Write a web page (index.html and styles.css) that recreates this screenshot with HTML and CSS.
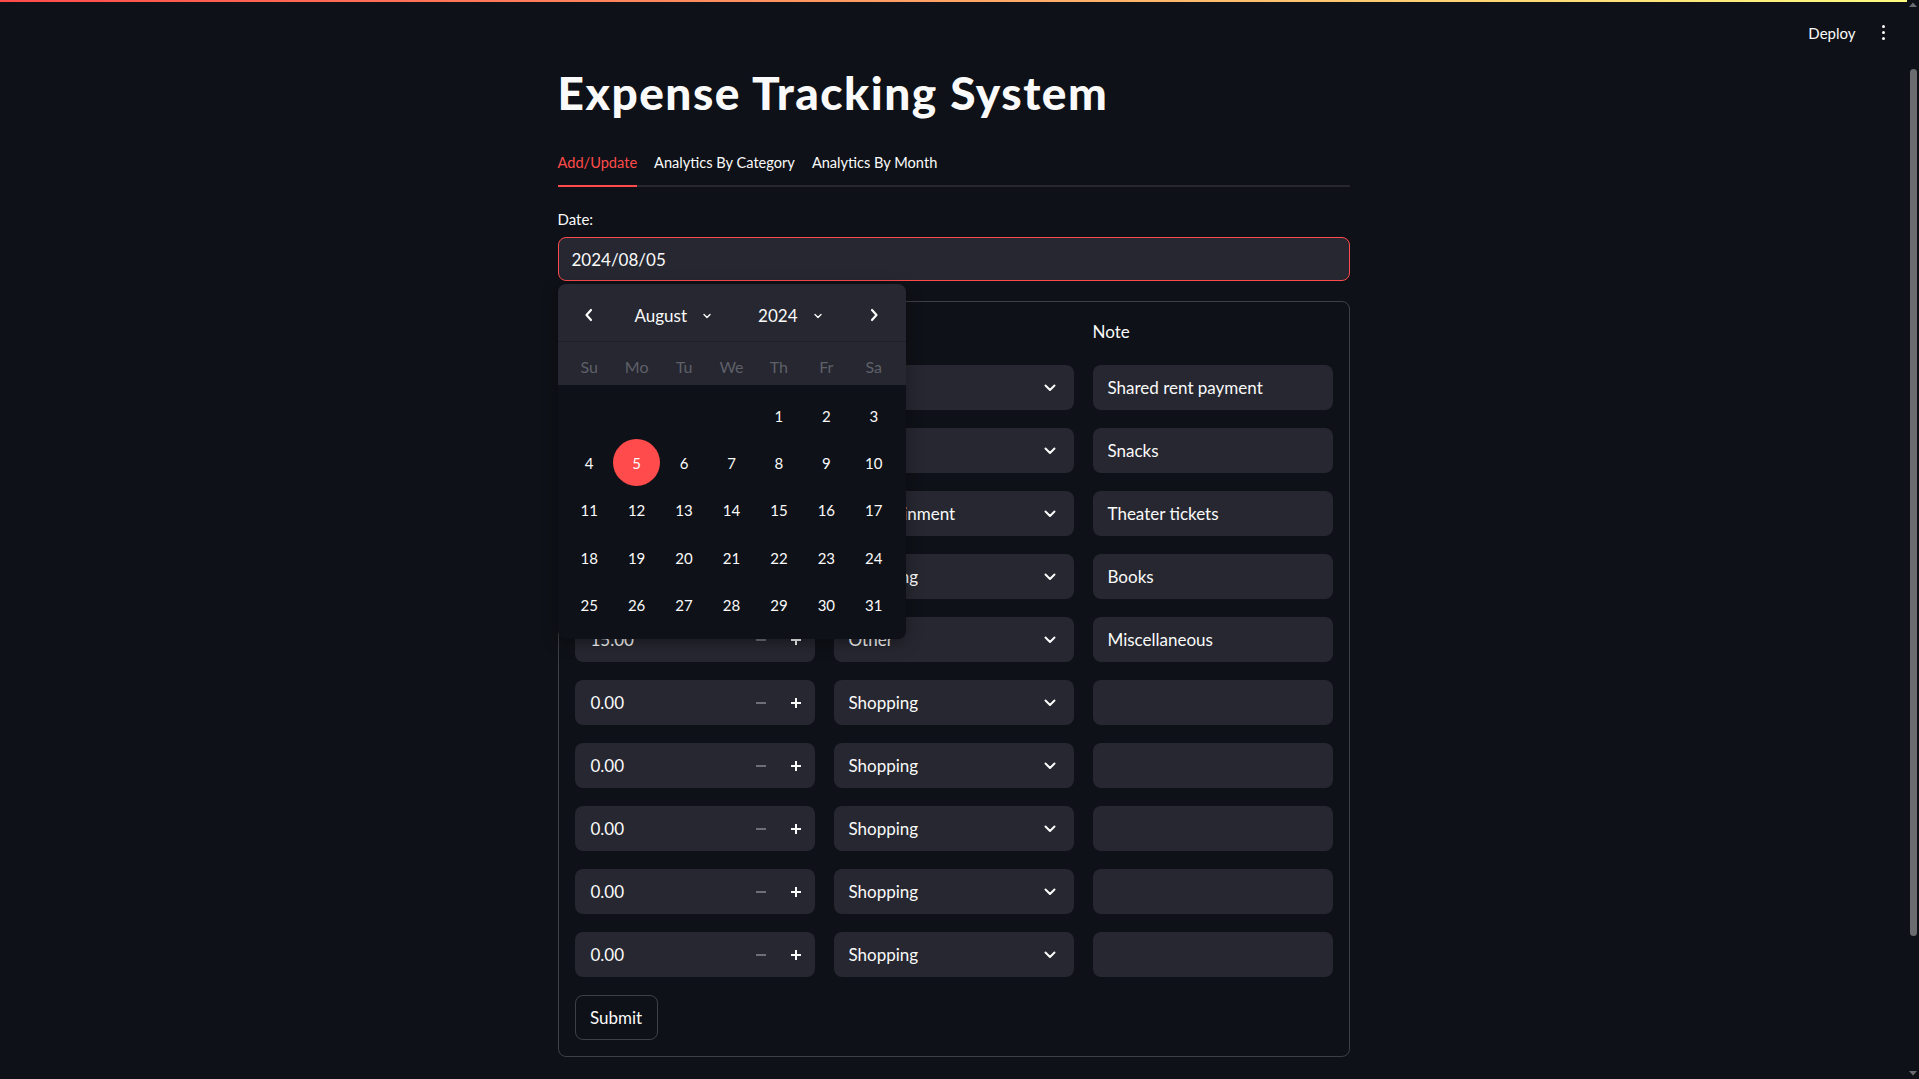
FILE: index.html
```html
<!DOCTYPE html>
<html lang="en">
<head>
<meta charset="utf-8">
<title>Expense Tracking System</title>
<link rel="stylesheet" href="styles.css">
</head>
<body>
<div class="app">
  <div class="decoration"></div>
  <header class="topbar">
    <span class="deploy">Deploy</span>
    <span class="menu"><i></i><i></i><i></i></span>
  </header>
  <main class="main">
    <h1 class="title">Expense Tracking System</h1>
    <nav class="tabs">
      <span class="tab active">Add/Update</span>
      <span class="tab">Analytics By Category</span>
      <span class="tab">Analytics By Month</span>
    </nav>
    <div class="field-label">Date:</div>
    <div class="date-field">
      <div class="date-input">2024/08/05</div>
      <div class="calendar">
        <div class="cal-head">
          <div class="cal-nav">
            <svg class="nav-arrow" width="10" height="14" viewBox="0 0 10 14"><path d="M7 2 L2.5 7 L7 12" fill="none" stroke="#fafafa" stroke-width="2.2" stroke-linecap="round" stroke-linejoin="round"/></svg>
            <span class="cal-select month">August<svg width="10" height="6" viewBox="0 0 10 6"><path d="M2 1.5 L5 4.5 L8 1.5" fill="none" stroke="#fafafa" stroke-width="1.4" stroke-linecap="round" stroke-linejoin="round"/></svg></span>
            <span class="cal-select year">2024<svg width="10" height="6" viewBox="0 0 10 6"><path d="M2 1.5 L5 4.5 L8 1.5" fill="none" stroke="#fafafa" stroke-width="1.4" stroke-linecap="round" stroke-linejoin="round"/></svg></span>
            <svg class="nav-arrow" width="10" height="14" viewBox="0 0 10 14"><path d="M3 2 L7.5 7 L3 12" fill="none" stroke="#fafafa" stroke-width="2.2" stroke-linecap="round" stroke-linejoin="round"/></svg>
          </div>
          <div class="cal-weekdays">
            <span>Su</span><span>Mo</span><span>Tu</span><span>We</span><span>Th</span><span>Fr</span><span>Sa</span>
          </div>
        </div>
        <div class="cal-days">
          <span></span><span></span><span></span><span></span><span>1</span><span>2</span><span>3</span>
          <span>4</span><span class="sel">5</span><span>6</span><span>7</span><span>8</span><span>9</span><span>10</span>
          <span>11</span><span>12</span><span>13</span><span>14</span><span>15</span><span>16</span><span>17</span>
          <span>18</span><span>19</span><span>20</span><span>21</span><span>22</span><span>23</span><span>24</span>
          <span>25</span><span>26</span><span>27</span><span>28</span><span>29</span><span>30</span><span>31</span>
        </div>
      </div>
    </div>
    <form class="form">
      <div class="grid">
        <div class="col-label"></div>
        <div class="col-label"></div>
        <div class="col-label">Note</div>

        <div class="box num"><span class="val"></span><span class="step minus"><svg width="12" height="12" viewBox="0 0 12 12"><path d="M1 6 H11" stroke="#6d6f78" stroke-width="2"/></svg></span><span class="step plus"><svg width="12" height="12" viewBox="0 0 12 12"><path d="M1 6 H11 M6 1 V11" stroke="#fafafa" stroke-width="2"/></svg></span></div>
        <div class="box sel-box"><span></span><svg width="14" height="10" viewBox="0 0 14 10"><path d="M2.5 2.5 L7 7 L11.5 2.5" fill="none" stroke="#fafafa" stroke-width="2" stroke-linecap="round" stroke-linejoin="round"/></svg></div>
        <div class="box note">Shared rent payment</div>

        <div class="box num"><span class="val"></span><span class="step minus"><svg width="12" height="12" viewBox="0 0 12 12"><path d="M1 6 H11" stroke="#6d6f78" stroke-width="2"/></svg></span><span class="step plus"><svg width="12" height="12" viewBox="0 0 12 12"><path d="M1 6 H11 M6 1 V11" stroke="#fafafa" stroke-width="2"/></svg></span></div>
        <div class="box sel-box"><span></span><svg width="14" height="10" viewBox="0 0 14 10"><path d="M2.5 2.5 L7 7 L11.5 2.5" fill="none" stroke="#fafafa" stroke-width="2" stroke-linecap="round" stroke-linejoin="round"/></svg></div>
        <div class="box note">Snacks</div>

        <div class="box num"><span class="val"></span><span class="step minus"><svg width="12" height="12" viewBox="0 0 12 12"><path d="M1 6 H11" stroke="#6d6f78" stroke-width="2"/></svg></span><span class="step plus"><svg width="12" height="12" viewBox="0 0 12 12"><path d="M1 6 H11 M6 1 V11" stroke="#fafafa" stroke-width="2"/></svg></span></div>
        <div class="box sel-box"><span>Entertainment</span><svg width="14" height="10" viewBox="0 0 14 10"><path d="M2.5 2.5 L7 7 L11.5 2.5" fill="none" stroke="#fafafa" stroke-width="2" stroke-linecap="round" stroke-linejoin="round"/></svg></div>
        <div class="box note">Theater tickets</div>

        <div class="box num"><span class="val"></span><span class="step minus"><svg width="12" height="12" viewBox="0 0 12 12"><path d="M1 6 H11" stroke="#6d6f78" stroke-width="2"/></svg></span><span class="step plus"><svg width="12" height="12" viewBox="0 0 12 12"><path d="M1 6 H11 M6 1 V11" stroke="#fafafa" stroke-width="2"/></svg></span></div>
        <div class="box sel-box"><span>Shopping</span><svg width="14" height="10" viewBox="0 0 14 10"><path d="M2.5 2.5 L7 7 L11.5 2.5" fill="none" stroke="#fafafa" stroke-width="2" stroke-linecap="round" stroke-linejoin="round"/></svg></div>
        <div class="box note">Books</div>

        <div class="box num"><span class="val">15.00</span><span class="step minus"><svg width="12" height="12" viewBox="0 0 12 12"><path d="M1 6 H11" stroke="#6d6f78" stroke-width="2"/></svg></span><span class="step plus"><svg width="12" height="12" viewBox="0 0 12 12"><path d="M1 6 H11 M6 1 V11" stroke="#fafafa" stroke-width="2"/></svg></span></div>
        <div class="box sel-box"><span>Other</span><svg width="14" height="10" viewBox="0 0 14 10"><path d="M2.5 2.5 L7 7 L11.5 2.5" fill="none" stroke="#fafafa" stroke-width="2" stroke-linecap="round" stroke-linejoin="round"/></svg></div>
        <div class="box note">Miscellaneous</div>

        <div class="box num"><span class="val">0.00</span><span class="step minus"><svg width="12" height="12" viewBox="0 0 12 12"><path d="M1 6 H11" stroke="#6d6f78" stroke-width="2"/></svg></span><span class="step plus"><svg width="12" height="12" viewBox="0 0 12 12"><path d="M1 6 H11 M6 1 V11" stroke="#fafafa" stroke-width="2"/></svg></span></div>
        <div class="box sel-box"><span>Shopping</span><svg width="14" height="10" viewBox="0 0 14 10"><path d="M2.5 2.5 L7 7 L11.5 2.5" fill="none" stroke="#fafafa" stroke-width="2" stroke-linecap="round" stroke-linejoin="round"/></svg></div>
        <div class="box note"></div>

        <div class="box num"><span class="val">0.00</span><span class="step minus"><svg width="12" height="12" viewBox="0 0 12 12"><path d="M1 6 H11" stroke="#6d6f78" stroke-width="2"/></svg></span><span class="step plus"><svg width="12" height="12" viewBox="0 0 12 12"><path d="M1 6 H11 M6 1 V11" stroke="#fafafa" stroke-width="2"/></svg></span></div>
        <div class="box sel-box"><span>Shopping</span><svg width="14" height="10" viewBox="0 0 14 10"><path d="M2.5 2.5 L7 7 L11.5 2.5" fill="none" stroke="#fafafa" stroke-width="2" stroke-linecap="round" stroke-linejoin="round"/></svg></div>
        <div class="box note"></div>

        <div class="box num"><span class="val">0.00</span><span class="step minus"><svg width="12" height="12" viewBox="0 0 12 12"><path d="M1 6 H11" stroke="#6d6f78" stroke-width="2"/></svg></span><span class="step plus"><svg width="12" height="12" viewBox="0 0 12 12"><path d="M1 6 H11 M6 1 V11" stroke="#fafafa" stroke-width="2"/></svg></span></div>
        <div class="box sel-box"><span>Shopping</span><svg width="14" height="10" viewBox="0 0 14 10"><path d="M2.5 2.5 L7 7 L11.5 2.5" fill="none" stroke="#fafafa" stroke-width="2" stroke-linecap="round" stroke-linejoin="round"/></svg></div>
        <div class="box note"></div>

        <div class="box num"><span class="val">0.00</span><span class="step minus"><svg width="12" height="12" viewBox="0 0 12 12"><path d="M1 6 H11" stroke="#6d6f78" stroke-width="2"/></svg></span><span class="step plus"><svg width="12" height="12" viewBox="0 0 12 12"><path d="M1 6 H11 M6 1 V11" stroke="#fafafa" stroke-width="2"/></svg></span></div>
        <div class="box sel-box"><span>Shopping</span><svg width="14" height="10" viewBox="0 0 14 10"><path d="M2.5 2.5 L7 7 L11.5 2.5" fill="none" stroke="#fafafa" stroke-width="2" stroke-linecap="round" stroke-linejoin="round"/></svg></div>
        <div class="box note"></div>

        <div class="box num"><span class="val">0.00</span><span class="step minus"><svg width="12" height="12" viewBox="0 0 12 12"><path d="M1 6 H11" stroke="#6d6f78" stroke-width="2"/></svg></span><span class="step plus"><svg width="12" height="12" viewBox="0 0 12 12"><path d="M1 6 H11 M6 1 V11" stroke="#fafafa" stroke-width="2"/></svg></span></div>
        <div class="box sel-box"><span>Shopping</span><svg width="14" height="10" viewBox="0 0 14 10"><path d="M2.5 2.5 L7 7 L11.5 2.5" fill="none" stroke="#fafafa" stroke-width="2" stroke-linecap="round" stroke-linejoin="round"/></svg></div>
        <div class="box note"></div>
      </div>
      <button class="submit" type="button">Submit</button>
    </form>
  </main>
</div>
<div class="scrollbar">
  <svg class="sb-arrow" width="10" height="8" viewBox="0 0 10 8"><path d="M1 6 L5 1.5 L9 6 Z" fill="#6b6c70"/></svg>
  <div class="sb-track"><div class="sb-thumb"></div></div>
  <svg class="sb-arrow" width="10" height="8" viewBox="0 0 10 8"><path d="M1 2 L5 6.5 L9 2 Z" fill="#6b6c70"/></svg>
</div>
</body>
</html>
```

FILE: styles.css
```css
* { box-sizing: border-box; }
html, body { margin: 0; padding: 0; height: 100%; }
body {
  background: #0e1117;
  color: #fafafa;
  font-family: "Lato", "Liberation Sans", sans-serif;
  display: flex;
  overflow: hidden;
}
.app { flex: 1; min-width: 0; }
.decoration {
  height: 2px;
  background: linear-gradient(90deg, #ff4b4b, #fffd80);
}
.topbar {
  height: 62px;
  display: flex;
  justify-content: flex-end;
  align-items: center;
  padding-right: 22px;
  gap: 26px;
}
.deploy { font-size: 15px; color: #fafafa; }
.menu { display: flex; flex-direction: column; gap: 2.5px; padding-bottom: 1px; }
.menu i { display: block; width: 3.5px; height: 3.5px; border-radius: 50%; background: #fafafa; }

.main { width: 792px; margin: 0 auto; padding-top: 1px; }
.title {
  margin: 0;
  font-size: 46px;
  font-weight: 900;
  line-height: 1.2;
  letter-spacing: 1.5px;
}
.tabs {
  margin-top: 21px;
  display: flex;
  gap: 17px;
  border-bottom: 2px solid #26272f;
}
.tab {
  font-size: 14.6px;
  line-height: 20px;
  padding: 12px 0 12px;
  border-bottom: 2px solid transparent;
  margin-bottom: -2px;
}
.tab.active { color: #ff4b4b; border-bottom-color: #ff4b4b; }

.field-label { margin-top: 21px; font-size: 15px; line-height: 22px; margin-bottom: 7px; }
.date-field { position: relative; }
.date-input {
  height: 44px;
  border: 1px solid #ff4b4b;
  border-radius: 8px;
  background: #262730;
  display: flex;
  align-items: center;
  padding-left: 13px;
  font-size: 17px;
}

.calendar {
  position: absolute;
  top: calc(100% + 3px);
  left: 0;
  width: 348px;
  z-index: 5;
  border-radius: 8px;
  overflow: hidden;
  background: #0e1117;
  box-shadow: 0 4px 16px rgba(0,0,0,0.35);
}
.cal-head { background: #262730; }
.cal-nav {
  height: 58px;
  padding-top: 5px;
  display: flex;
  align-items: center;
  border-bottom: 1px solid #1f2027;
  font-size: 17px;
}
.nav-arrow { margin-left: 26px; }
.nav-arrow:last-child { margin-left: 0; margin-right: 27px; }
.cal-select { display: flex; align-items: center; gap: 15px; }
.cal-select svg { margin-top: 2px; }
.month { margin-left: 41px; }
.year { margin-left: 46px; flex: 1; }
.cal-weekdays {
  display: grid;
  grid-template-columns: repeat(7, 1fr);
  padding: 6px 8px 0;
  height: 43px;
  font-size: 16px;
  color: #5e6069;
  line-height: 37px;
  text-align: center;
}
.cal-days {
  display: grid;
  grid-template-columns: repeat(7, 1fr);
  grid-auto-rows: 47.3px;
  padding: 7px 8px 10px;
  font-size: 15px;
}
.cal-days span {
  display: flex;
  align-items: center;
  justify-content: center;
}
.cal-days .sel {
  background: #ff4b4b;
  border-radius: 50%;
  width: 47px;
  height: 47px;
  justify-self: center;
}

.form {
  margin: 20px 0 0;
  border: 1px solid rgba(250,250,250,0.2);
  border-radius: 8px;
  padding: 16px 16px 16px;
}
.grid {
  display: grid;
  grid-template-columns: repeat(3, 1fr);
  column-gap: 19px;
  row-gap: 18px;
}
.col-label {
  font-size: 17px;
  line-height: 28px;
  margin-bottom: 1px;
}
.box {
  height: 45px;
  background: #262730;
  border-radius: 8px;
  display: flex;
  align-items: center;
  font-size: 17px;
}
.num { padding-left: 16px; }
.num .val { flex: 1; }
.step { width: 35px; height: 100%; display: flex; align-items: center; justify-content: center; }
.step.plus { margin-right: 1px; }
.sel-box { padding: 0 17px 0 15px; justify-content: space-between; }
.note { padding-left: 15px; }
.submit {
  margin-top: 18px;
  height: 45px;
  width: 83px;
  background: transparent;
  border: 1px solid rgba(250,250,250,0.2);
  border-radius: 8px;
  color: #fafafa;
  font-family: inherit;
  font-size: 17px;
  padding: 0;
  display: block;
}

.scrollbar {
  width: 12px;
  display: flex;
  flex-direction: column;
  align-items: center;
}
.sb-arrow { flex: none; margin-top: 1px; }
.sb-track { flex: 1; padding: 60px 0 133px; display: flex; justify-content: center; }
.sb-thumb { width: 7px; background: #6b6c70; border-radius: 4px; flex: 1; }
.scrollbar .sb-arrow:last-child { margin: 0 0 2px; }
```
